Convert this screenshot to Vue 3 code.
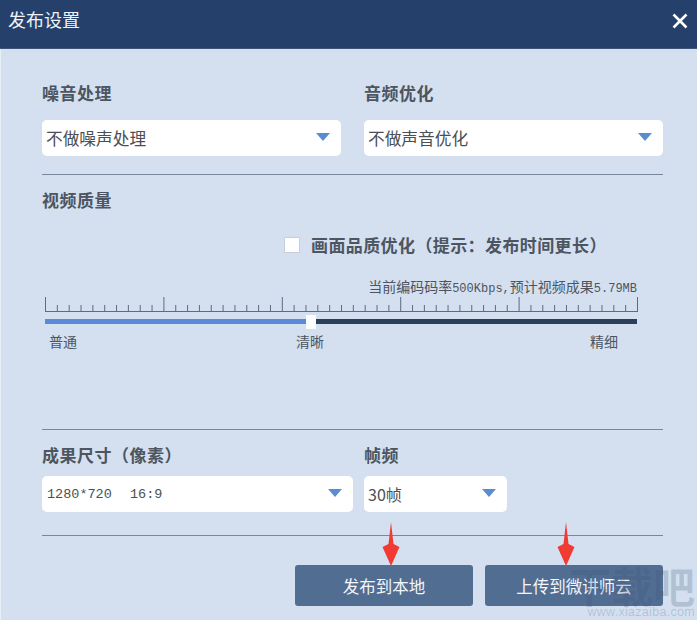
<script setup>
const ticks = Array.from({ length: 51 }, (_, i) => ({
  x: 0.5 + (i * 592) / 50,
  top: i % 10 === 0 ? 0 : 8,
}))
</script>

<template>
  <div class="dialog">
    <header class="titlebar">
      <span class="title">发布设置</span>
      <svg class="close" width="16" height="16" viewBox="0 0 16 16">
        <path d="M1.5 1.5 14.5 14.5M14.5 1.5 1.5 14.5" stroke="#fff" stroke-width="2.6" fill="none" />
      </svg>
    </header>

    <main class="content">
      <section class="row audio">
        <div class="field">
          <h3 class="label">噪音处理</h3>
          <div class="select">
            <span>不做噪声处理</span>
            <i class="caret"></i>
          </div>
        </div>
        <div class="field">
          <h3 class="label">音频优化</h3>
          <div class="select">
            <span>不做声音优化</span>
            <i class="caret"></i>
          </div>
        </div>
      </section>

      <hr class="rule" />

      <section class="quality">
        <h3 class="label">视频质量</h3>
        <div class="check-row">
          <span class="checkbox"></span>
          <span class="check-text">画面品质优化（提示：发布时间更长）</span>
        </div>
        <div class="rate">当前编码码率<span class="mono">500Kbps,</span>预计视频成果<span class="mono">5.79MB</span></div>
        <svg class="ruler" width="594" height="15" viewBox="0 0 594 15">
          <line x1="0" y1="14.5" x2="593" y2="14.5" stroke="#5d6b80" stroke-width="1" />
          <line
            v-for="t in ticks"
            :key="t.x"
            :x1="t.x"
            :x2="t.x"
            :y1="t.top"
            y2="14"
            stroke="#5d6b80"
            stroke-width="1"
          />
        </svg>
        <div class="slider">
          <div class="fill"></div>
          <div class="thumb"></div>
          <div class="rest"></div>
        </div>
        <div class="scale">
          <span>普通</span>
          <span>清晰</span>
          <span>精细</span>
        </div>
      </section>

      <hr class="rule second" />

      <section class="row output">
        <div class="field size">
          <h3 class="label">成果尺寸（像素）</h3>
          <div class="select">
            <span class="mono-value">1280*720&nbsp;&nbsp;16:9</span>
            <i class="caret"></i>
          </div>
        </div>
        <div class="field fps">
          <h3 class="label">帧频</h3>
          <div class="select">
            <span class="fps-value">30帧</span>
            <i class="caret"></i>
          </div>
        </div>
      </section>

      <hr class="rule third" />

      <section class="actions">
        <button class="btn">发布到本地</button>
        <button class="btn">上传到微讲师云</button>
      </section>
    </main>

    <svg class="arrow a1" width="18" height="44" viewBox="0 0 18 44">
      <path d="M9 0 11.5 22 17.5 25 9 44 .5 25 6.500 22Z" fill="#f03a32" />
    </svg>
    <svg class="arrow a2" width="18" height="44" viewBox="0 0 18 44">
      <path d="M9 0 11.5 22 17.5 25 9 44 .5 25 6.500 22Z" fill="#f03a32" />
    </svg>

    <div class="watermark">
      <span class="wm-big">下载吧</span>
      <span class="wm-small">www.xiazaiba.com</span>
    </div>
  </div>
</template>

<style scoped>
.dialog {
  position: relative;
  width: 697px;
  height: 620px;
  overflow: hidden;
  background: #d4e0f0;
  font-family: "Noto Sans CJK SC", "Liberation Sans", sans-serif;
  color: #4c5560;
  display: flex;
  flex-direction: column;
}
.titlebar {
  height: 49px;
  flex: none;
  box-sizing: border-box;
  border-bottom: 1px solid #3d5678;
  background: #25406a;
  display: flex;
  align-items: center;
  justify-content: space-between;
  padding: 0 9px 10px 8px;
}
.title {
  color: #eef2f7;
  font-size: 18px;
  line-height: 24px;
}
.close {
  margin-top: 4px;
}
.content {
  flex: 1;
  box-sizing: border-box;
  border-left: 1px solid #e9eff7;
  padding: 0 34px 0 41px;
}
.row {
  display: flex;
  gap: 23px;
}
.audio {
  padding-top: 32px;
}
.audio .field {
  width: 299px;
}
.field {
  display: flex;
  flex-direction: column;
}
.label {
  margin: 0;
  font-size: 17px;
  line-height: 24px;
  letter-spacing: 0.5px;
  font-weight: 700;
  color: #4c5560;
}
.select {
  margin-top: 15px;
  height: 36px;
  box-sizing: border-box;
  border-radius: 5px;
  background: #fff;
  display: flex;
  align-items: center;
  justify-content: space-between;
  padding: 0 11px 0 4px;
  font-size: 16.7px;
  color: #4a4f55;
}
.caret {
  width: 0;
  height: 0;
  margin-bottom: 3px;
  border-left: 7.5px solid transparent;
  border-right: 7.5px solid transparent;
  border-top: 8px solid #5b8bd0;
}
.rule {
  margin: 0;
  border: 0;
  height: 1px;
  background: #78889c;
}
.audio + .rule {
  margin-top: 18px;
}
.quality {
  padding-top: 13px;
}
.check-row {
  margin-top: 21px;
  margin-left: 242px;
  display: flex;
  align-items: center;
  gap: 10px;
  height: 24px;
}
.checkbox {
  width: 14px;
  height: 14px;
  border: 1px solid #c6cedb;
  background: #fff;
  border-radius: 1px;
}
.check-text {
  font-size: 17px;
  line-height: 24px;
  font-weight: 700;
  color: #4c5560;
  letter-spacing: 0.4px;
  margin-left: 1px;
}
.rate {
  margin-top: 21px;
  width: 595px;
  text-align: right;
  font-size: 14px;
  line-height: 16px;
  color: #4c5560;
  white-space: nowrap;
}
.mono {
  font-family: "Liberation Mono", monospace;
  font-size: 12px;
}
.ruler {
  display: block;
  margin-left: 3px;
}
.slider {
  margin-top: 7px;
  margin-left: 3px;
  width: 592px;
  height: 5px;
  display: flex;
  align-items: center;
  position: relative;
}
.fill {
  width: 261px;
  height: 5px;
  background: #5b8bd6;
}
.thumb {
  width: 10px;
  height: 14px;
  background: #fbfdff;
  flex: none;
}
.rest {
  flex: 1;
  height: 5px;
  background: #2c3f58;
}
.scale {
  margin-top: 7px;
  margin-left: 7px;
  display: grid;
  grid-template-columns: 247px 294px auto;
  font-size: 14px;
  line-height: 20px;
  color: #4c5560;
}
.rule.second {
  margin-top: 78px;
}
.output {
  padding-top: 13px;
  gap: 11px;
}
.size {
  width: 311px;
}
.fps {
  width: 143px;
}
.output .select {
  margin-top: 9px;
}
.size .select {
  padding-left: 5px;
  padding-right: 11px;
}
.fps .select {
  padding-left: 4px;
  padding-right: 11px;
}
.mono-value {
  font-family: "Liberation Mono", monospace;
  font-size: 13.5px;
  word-spacing: 1px;
}
.fps-value {
  font-size: 16px;
}
.rule.third {
  margin-top: 23px;
}
.actions {
  display: flex;
  justify-content: flex-end;
  gap: 12px;
  padding-top: 29px;
}
.btn {
  width: 178px;
  height: 41px;
  border: 0;
  border-radius: 3px;
  background: #526d92;
  color: #f2f5f9;
  font-family: inherit;
  font-size: 16.5px;
  padding: 0;
}
.arrow {
  position: absolute;
  top: 522px;
}
.a1 {
  left: 382px;
}
.a2 {
  left: 557px;
}
.watermark {
  position: absolute;
  right: 2px;
  bottom: 1px;
  width: 128px;
  display: flex;
  flex-direction: column;
  align-items: flex-end;
  color: rgba(60, 80, 115, 0.22);
  pointer-events: none;
}
.wm-big {
  font-size: 42px;
  line-height: 42px;
  font-weight: 700;
}
.wm-small {
  font-family: "Liberation Sans", sans-serif;
  font-size: 12.500px;
  line-height: 13px;
  letter-spacing: 0.3px;
}
</style>

<style>
html,
body {
  margin: 0;
  background: #d4e0f0;
}
</style>
